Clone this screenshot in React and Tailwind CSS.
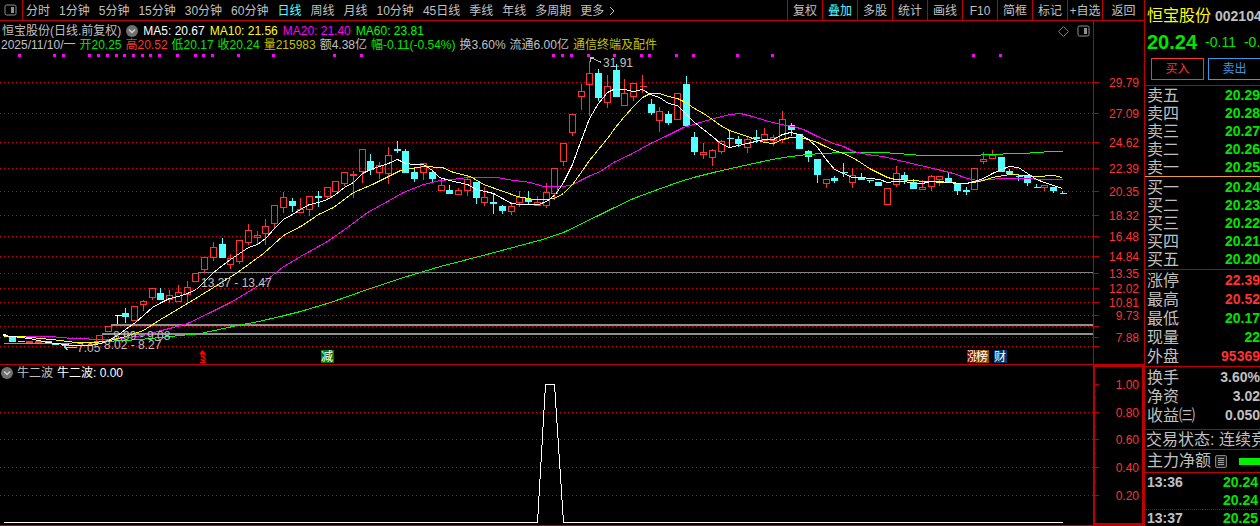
import React from "react";

const periods = [
  "分时", "1分钟", "5分钟", "15分钟", "30分钟", "60分钟", "日线", "周线",
  "月线", "10分钟", "45日线", "季线", "年线", "多周期",
];
const tools = ["复权", "叠加", "多股", "统计", "画线", "F10", "简框", "标记", "+自选"];

// [index, direction, high, bodyTop, bodyBottom, low]; u = rising (hollow), d = falling (solid), f = filled red
const candles = [
  [1, "d", 337, 337, 342, 342], [2, "d", 341, 341, 342, 342],
  [3, "f", 341, 341, 343, 343], [4, "f", 341, 341, 343, 343], [5, "d", 341, 341, 342, 342],
  [6, "d", 343, 343, 345, 345], [7, "d", 345, 345, 346, 347], [8, "f", 345, 345, 346, 346],
  [9, "f", 345, 345, 346, 346], [10, "f", 344, 344, 345, 345], [11, "u", 335, 335, 344, 344],
  [12, "u", 326, 326, 332, 332], [13, "w", 315, 315, 316, 323], [14, "d", 307, 313, 317, 322],
  [15, "u", 306, 306, 321, 321], [16, "u", 299, 301, 305, 310], [17, "u", 288, 288, 298, 299],
  [18, "d", 287, 293, 300, 300], [19, "u", 289, 295, 300, 302], [20, "u", 284, 292, 302, 302],
  [21, "u", 280, 287, 295, 303], [22, "u", 273, 273, 282, 282], [23, "u", 257, 257, 270, 272],
  [24, "u", 241, 247, 258, 260], [25, "d", 237, 244, 258, 258], [26, "u", 253, 258, 265, 268],
  [27, "u", 240, 240, 262, 263], [28, "u", 223, 230, 243, 244], [29, "u", 230, 235, 238, 243],
  [30, "u", 218, 226, 234, 244], [31, "u", 205, 205, 224, 227], [32, "u", 191, 197, 208, 212],
  [33, "d", 197, 201, 206, 211], [34, "u", 197, 209, 213, 213], [35, "u", 196, 196, 210, 215],
  [36, "d", 190, 196, 198, 206], [37, "u", 186, 187, 197, 198], [38, "u", 181, 181, 192, 192],
  [39, "u", 172, 172, 184, 185], [40, "f", 170, 174, 176, 197], [41, "u", 149, 149, 172, 182],
  [42, "d", 153, 161, 170, 174], [43, "u", 161, 165, 173, 178], [44, "u", 146, 155, 174, 183],
  [45, "d", 140, 149, 151, 152], [46, "d", 148, 151, 173, 173], [47, "d", 166, 172, 179, 181],
  [48, "u", 162, 163, 173, 179], [49, "d", 169, 172, 179, 181], [50, "u", 177, 185, 191, 191],
  [51, "d", 184, 190, 194, 194], [52, "u", 187, 190, 195, 195], [53, "u", 174, 179, 191, 195],
  [54, "d", 181, 182, 198, 203], [55, "u", 186, 197, 203, 205], [56, "d", 193, 202, 204, 213],
  [57, "d", 204, 206, 211, 213], [58, "u", 201, 206, 212, 214], [59, "u", 190, 197, 203, 206],
  [60, "d", 190, 199, 202, 204], [61, "u", 195, 202, 206, 206], [62, "u", 182, 192, 206, 207],
  [63, "u", 168, 168, 194, 199], [64, "u", 143, 143, 162, 165], [65, "u", 114, 114, 133, 135],
  [66, "u", 83, 91, 97, 109], [67, "u", 60, 73, 85, 115], [68, "d", 68, 73, 98, 100],
  [69, "u", 74, 86, 103, 107], [70, "d", 63, 70, 97, 97], [71, "u", 78, 93, 106, 106],
  [72, "u", 82, 83, 97, 100], [73, "f", 74, 86, 87, 92], [74, "d", 98, 104, 113, 114],
  [75, "u", 106, 111, 121, 131], [76, "d", 110, 114, 123, 124], [77, "u", 93, 93, 120, 120],
  [78, "d", 75, 84, 126, 126], [79, "d", 131, 137, 152, 154], [80, "u", 142, 152, 155, 158],
  [81, "u", 148, 150, 158, 165], [82, "u", 139, 141, 152, 153], [83, "d", 129, 138, 139, 147],
  [84, "d", 135, 139, 144, 146], [85, "u", 136, 139, 148, 152], [86, "d", 129, 137, 139, 142],
  [87, "u", 127, 134, 141, 142], [88, "u", 134, 137, 141, 145], [89, "u", 110, 119, 140, 142],
  [90, "d", 122, 125, 130, 135], [91, "d", 134, 134, 149, 149], [92, "d", 149, 151, 157, 161],
  [93, "d", 159, 159, 175, 182], [94, "u", 179, 179, 184, 187], [95, "d", 175, 178, 181, 182],
  [96, "d", 162, 172, 173, 176], [97, "u", 167, 175, 183, 187], [98, "d", 172, 177, 180, 180],
  [99, "d", 179, 180, 181, 182], [100, "d", 181, 182, 186, 186], [101, "u", 188, 188, 205, 205],
  [102, "u", 165, 173, 185, 186], [103, "d", 171, 175, 180, 183], [104, "d", 178, 182, 189, 189],
  [105, "u", 179, 187, 190, 190], [106, "u", 174, 176, 187, 190], [107, "u", 176, 176, 180, 185],
  [108, "d", 172, 178, 183, 183], [109, "d", 183, 183, 191, 194], [110, "d", 186, 190, 192, 194],
  [111, "u", 168, 168, 190, 190], [112, "u", 151, 159, 162, 163], [113, "u", 149, 155, 159, 159],
  [114, "d", 157, 157, 172, 172], [115, "d", 168, 171, 174, 174], [116, "d", 174, 176, 177, 180],
  [117, "d", 176, 176, 183, 185], [118, "d", 183, 187, 188, 188], [119, "u", 185, 185, 188, 190],
  [120, "d", 187, 187, 191, 192], [121, "d", 190, 193, 194, 194],
];

const ma5 =
  "3,335 12,336 20,337 29,338 38,340 47,342 56,343 64,344 73,345 90,345 100,343 108,340 117,335 125,329 135,322 143,315 152,307 161,302 169,298 178,296 187,293 196,289 204,281 213,272 222,265 230,259 239,253 248,247 257,244 265,238 274,228 283,219 292,214 300,209 309,204 318,202 327,199 335,194 344,187 353,182 362,173 370,169 379,166 388,163 397,159 405,163 414,164 423,164 432,170 439,177 449,180 458,182 467,184 476,189 485,191 493,193 502,198 511,203 520,204 538,204 546,201 555,194 563,182 572,164 580,142 589,118 598,103 607,92 613,89 624,89 633,91 642,89 650,94 659,97 668,103 677,105 685,113 694,122 703,129 712,136 720,143 729,147 738,145 747,143 755,141 764,139 773,139 782,134 790,132 799,134 808,139 817,147 825,158 834,169 843,173 852,177 861,177 869,178 879,179 887,182 895,181 904,181 913,183 922,183 930,181 939,181 948,182 957,183 966,183 974,181 983,178 992,173 1001,169 1009,166 1018,167 1027,173 1036,179 1044,182 1053,185 1062,188";
const ma10 =
  "3,336 20,336 40,338 60,340 75,342 95,342 110,340 125,336 143,330 160,319 187,303 213,287 237,272 263,253 283,235 302,225 318,214 333,207 353,192 372,184 388,176 400,170 423,166 442,167 453,172 470,176 483,184 503,191 517,196 533,199 545,199 554,198 563,193 572,184 580,173 589,160 598,149 607,138 615,127 624,116 633,106 642,97 650,93 659,93 668,96 677,98 685,102 694,108 703,113 712,119 720,125 729,130 738,133 747,136 755,139 764,142 773,143 782,139 790,137 799,137 808,139 817,142 825,146 834,150 843,153 852,157 860,162 869,168 879,173 887,177 895,179 913,180 923,181 948,182 963,183 973,182 983,180 992,177 1009,174 1027,175 1036,176 1053,175 1062,177";
const ma20 =
  "3,336 50,336 72,338 105,339 130,337 147,334 157,331 173,327 187,323 210,312 230,302 247,292 263,282 282,267 300,256 327,241 347,227 367,212 387,201 403,192 423,184 440,180 452,179 467,177 497,177 507,179 530,182 543,186 563,186 573,184 580,180 590,175 600,171 613,162 630,154 650,143 667,135 683,127 703,121 729,114 740,113 752,116 765,120 780,124 793,126 803,129 817,136 833,143 843,146 853,151 867,154 882,156 903,161 920,165 937,169 953,173 967,178 977,180 1000,178 1030,178 1037,179 1062,179";
const ma60 =
  "3,343 60,343 105,341 140,339 170,336 200,333 237,325 258,321 280,316 300,311 330,302 367,289 403,277 440,266 490,253 542,239 563,232 598,215 610,209 633,198 660,188 680,181 693,177 717,171 735,167 753,163 767,160 783,157 807,154 823,153 840,152 882,152 910,154 920,155 978,155 983,154 1023,153 1050,151 1062,151";

const gridRows = [
  [82, "29.79"], [113, "27.09"], [142, "24.62"], [168, "22.39"], [191, "20.35"],
  [215, "18.32"], [236, "16.48"], [256, "14.84"], [273, "13.35"], [288, "12.02"],
  [302, "10.81"], [315, "9.73"], [326, ""], [337, "7.88"], [346, ""],
];
const signals = [
  19, 54, 63, 89, 98, 107, 116, 124, 133, 142, 150, 159, 177, 195, 203, 212, 238, 273, 334, 361,
  553, 562, 571, 588, 614, 641, 649, 676, 693, 737, 772, 973, 1000,
];
const subRows = [[384, "1.00"], [412, "0.80"], [439, "0.60"], [467, "0.40"], [495, "0.20"]];

const tone = { u: "#ff3232", f: "#ff3232", d: "#54ffff", w: "#ffffff" };

function Candle({ c }) {
  const [i, kind, high, top, bottom, low] = c;
  const x = Math.round(2.9 + 8.752 * i);
  const color = tone[kind];
  const body = bottom - 1 - top;
  return (
    <g stroke={color} fill={kind === "u" ? "none" : color}>
      {high < top && <line x1={x} x2={x} y1={high} y2={top} />}
      {low > bottom && <line x1={x} x2={x} y1={bottom - 1} y2={low} />}
      {body > 0 ? (
        <rect x={x - 3} y={top} width="6" height={body} />
      ) : (
        <line x1={x - 3} x2={x + 4} y1={top} y2={top} />
      )}
    </g>
  );
}

function PanelIcon({ className }) {
  return (
    <svg className={className} width="13" height="12" viewBox="0 0 13 12" aria-hidden="true">
      <rect x="1" y="1" width="11" height="10" rx="1.5" fill="none" stroke="#909090" />
      <rect x="7" y="3" width="3" height="6" fill="#909090" />
    </svg>
  );
}

function DropIcon() {
  return (
    <svg width="12" height="12" viewBox="0 0 12 12" aria-hidden="true">
      <circle cx="6" cy="6" r="6" fill="#707070" />
      <path d="M3 4.5 L6 7.5 L9 4.5" fill="none" stroke="#d0d0d0" strokeWidth="1.5" />
    </svg>
  );
}

function GridLine({ y }) {
  return <line x1="0" x2="100%" y1={y + 0.5} y2={y + 0.5} stroke="#d00000" strokeDasharray="1 3" />;
}

function Badge({ x, color, children }) {
  return (
    <g>
      <rect x={x} y="350" width="13" height="13" fill={color} />
      <text x={x} y="361" fill="#ffffff">{children}</text>
    </g>
  );
}

function PriceChart() {
  return (
    <svg className="block h-[312px] w-full text-xs" role="img" aria-label="日线">
      <g transform="translate(0,-52)">
        <g shapeRendering="crispEdges">
          {gridRows.map(([y]) => <GridLine key={y} y={y} />)}
          <line x1="198" x2="100%" y1="272.5" y2="272.5" stroke="#848484" />
        </g>
        <g shapeRendering="crispEdges" stroke="#909090" strokeWidth="2">
          <line x1="111" x2="100%" y1="325" y2="325" />
          <line x1="102" x2="100%" y1="334" y2="334" />
        </g>
        <g fill="#ff00ff" shapeRendering="crispEdges">
          {signals.map((x) => (
            <rect key={x} x={x - 1} y="54" width="3" height="3" />
          ))}
        </g>
        <rect x="3" y="334" width="3" height="2" fill="#ffffff" />
        <g transform="translate(0.5,0.5)" shapeRendering="crispEdges">
          {candles.map((c) => <Candle key={c[0]} c={c} />)}
          <g fill="none">
            <polyline points={ma60} stroke="#00ff00" />
            <polyline points={ma20} stroke="#ff00ff" />
            <polyline points={ma10} stroke="#ffff00" />
            <polyline points={ma5} stroke="#ffffff" />
          </g>
          <g fill="none" stroke="#c0c0c0">
            <path d="M590 57 L601 62 M590 57 H593 M590 57 V61" />
            <path d="M64 347 H76 M68 343 L64 347 L68 350" />
          </g>
        </g>
        <g fill="#c0c0c0">
          <text x="603" y="67">31.91</text>
          <text x="201" y="287">13.37 - 13.47</text>
          <text x="113" y="340">8.99 - 9.08</text>
          <text x="104" y="349">8.02 - 8.27</text>
          <text x="77" y="352">7.05</text>
        </g>
        <path d="M202.5 350 L199 354 H206 Z" fill="#ff0000" />
        <text x="200" y="361" fill="#ff0000" className="text-[10px] font-bold">$</text>
        <path d="M200 362.5 H206" stroke="#ff0000" />
        <Badge x={321} color="#008000">减</Badge>
        <Badge x={967} color="#800000">涨</Badge>
        <Badge x={976} color="#904800">榜</Badge>
        <Badge x={994} color="#003870">财</Badge>
      </g>
    </svg>
  );
}

function PriceAxis() {
  return (
    <svg className="block h-[343px] w-[51px] shrink-0 text-xs" aria-label="价格">
      <g transform="translate(0,-21)">
        <line x1="0.5" x2="0.5" y1="21" y2="364" stroke="#c00000" />
        {gridRows.map(([y, label]) => (
          <g key={y}>
            <line x1="0" x2="6" y1={y + 0.5} y2={y + 0.5} stroke="#c00000" />
            <text x="46" y={y + 5} textAnchor="end" fill="#ff3232">{label}</text>
          </g>
        ))}
      </g>
    </svg>
  );
}

function SubAxis() {
  return (
    <div className="w-[51px] shrink-0 border-2 border-[#c00000]">
      <svg className="block h-[156px] w-full text-xs" aria-label="指标刻度">
        <g transform="translate(-2,-367)">
          {subRows.map(([y, label], i) => (
            <g key={y}>
              <line x1="2" x2="6" y1={y + 0.5} y2={y + 0.5} stroke="#c00000" />
              {i < 4 && <line x1="2" x2="3" y1={y + 14.5} y2={y + 14.5} stroke="#c00000" />}
              <text x="46" y={y + 5} textAnchor="end" fill="#ff3232">{label}</text>
            </g>
          ))}
        </g>
      </svg>
    </div>
  );
}

function Rows({ rows, rowClass }) {
  return (
    <table className="w-full">
      <tbody>
        {rows.map(([name, value, color]) => (
          <tr key={name} className={rowClass}>
            <th scope="row" className="p-0 pt-0.5 text-left text-base leading-none font-normal whitespace-nowrap text-[#c0c0c0]">
              {name}
            </th>
            <td className={"p-0 text-right text-sm leading-none font-bold " + color}>{value}</td>
          </tr>
        ))}
      </tbody>
    </table>
  );
}

const G = "text-[#00e600]";
const R = "text-[#ff3232]";
const W = "text-[#c0c0c0]";

function QuotePanel() {
  return (
    <aside className="w-[116px] shrink-0 overflow-hidden border-l border-[#c00000] whitespace-nowrap">
      <header className="border-b border-[#c00000] pb-[5px]">
        <h1 className="flex h-[30px] items-center gap-1 pt-0.5 pl-0.5">
          <span className="shrink-0 text-base font-normal text-[#ffff00]">恒宝股份</span>
          <span className="text-sm font-bold text-[#c0c0c0]">002104</span>
        </h1>
        <div className="flex h-7 items-center gap-2 pb-1 pl-0.5 text-[#00e600]">
          <span className="text-xl leading-none font-bold">20.24</span>
          <span className="text-sm">-0.11</span>
          <span className="text-sm">-0.54%</span>
        </div>
        <div className="flex gap-1 pl-1.5">
          <button type="button" className="h-[22px] w-[53px] shrink-0 border border-[#ff3232] text-xs text-[#ff3232]">买入</button>
          <button type="button" className="h-[22px] w-[53px] shrink-0 border border-[#3c96e6] text-xs text-[#3c96e6]">卖出</button>
        </div>
      </header>
      <section className="border-b border-[#f0a030] pl-0.5">
        <Rows
          rowClass="h-[18px]"
          rows={[["卖五", "20.29", G], ["卖四", "20.28", G], ["卖三", "20.27", G], ["卖二", "20.26", G], ["卖一", "20.25", G]]}
        />
      </section>
      <section className="border-b border-[#c00000] py-px pl-0.5">
        <Rows
          rowClass="h-[18px]"
          rows={[["买一", "20.24", G], ["买二", "20.23", G], ["买三", "20.22", G], ["买四", "20.21", G], ["买五", "20.20", G]]}
        />
      </section>
      <section className="border-b border-[#c00000] pb-px pl-0.5">
        <Rows
          rowClass="h-[19px]"
          rows={[["涨停", "22.39", R], ["最高", "20.52", R], ["最低", "20.17", G], ["现量", "22", G], ["外盘", "95369", R]]}
        />
      </section>
      <section className="border-b border-[#c00000] pb-[5px] pl-0.5">
        <Rows
          rowClass="h-[19px]"
          rows={[["换手", "3.60%", W], ["净资", "3.02", W], ["收益㈢", "0.050", W]]}
        />
      </section>
      <p className="h-5 border-b border-[#c00000] pl-px text-base leading-[19px] text-[#c0c0c0]">交易状态: 连续竞价</p>
      <div className="flex h-[23px] items-center border-b border-[#c00000] pl-0.5 text-base text-[#c0c0c0]">
        主力净额
        <svg className="ml-1 shrink-0" width="12" height="13" viewBox="0 0 12 13" aria-hidden="true">
          <rect x="0.5" y="0.5" width="11" height="12" rx="1.5" fill="#202020" stroke="#808080" />
          <path d="M3 3.5H9M3 5.5H9M3 7.5H9M3 9.5H9" stroke="#a0a0a0" />
        </svg>
        <span className="ml-3 h-[7px] flex-1 bg-[#00f000]" />
      </div>
      <table className="w-full text-sm leading-none font-bold">
        <tbody>
          <tr className="h-[18px]">
            <td className="p-0 pl-0.5 text-[#c0c0c0]">13:36</td>
            <td className="p-0 pr-0.5 text-right text-[#00e600]">20.24</td>
          </tr>
          <tr className="h-[18px] border-b border-dotted border-[#c00000]">
            <td className="p-0" />
            <td className="p-0 pr-0.5 text-right text-[#00e600]">20.24</td>
          </tr>
          <tr className="h-[17px]">
            <td className="p-0 pl-0.5 text-[#c0c0c0]">13:37</td>
            <td className="p-0 pr-0.5 text-right text-[#00e600]">20.25</td>
          </tr>
        </tbody>
      </table>
    </aside>
  );
}

export default function App() {
  return (
    <div className="flex items-stretch overflow-hidden bg-black font-['Liberation_Sans','Noto_Sans_CJK_SC',sans-serif] text-[#c0c0c0]">
      <main className="min-w-0 flex-1">
        <nav className="flex h-[21px] items-stretch overflow-hidden border-b border-[#c00000] text-xs leading-[18px] whitespace-nowrap">
          <button type="button" aria-label="侧栏" className="flex w-[23px] shrink-0 items-center border-r border-[#c00000] pl-1">
            <PanelIcon />
          </button>
          <div className="flex min-w-0 flex-1 gap-[9px] overflow-hidden pl-[3px]">
            {periods.map((p) => (
              <button key={p} type="button" className={"pt-0.5 " + (p === "日线" ? "text-[#54ffff]" : "")}>{p}</button>
            ))}
            <button type="button" className="flex items-center pt-0.5">
              更多
              <svg className="ml-1" width="8" height="10" viewBox="0 0 8 10" aria-hidden="true">
                <path d="M2 1 L6 5 L2 9" fill="none" stroke="#c0c0c0" />
              </svg>
            </button>
          </div>
          {tools.map((t) => (
            <button key={t} type="button" className={"w-[35px] shrink-0 border-l border-[#c00000] pt-0.5 " + (t === "叠加" ? "text-[#54ffff]" : "")}>
              {t}
            </button>
          ))}
          <button type="button" className="w-[42px] shrink-0 border-l border-[#c00000] pt-0.5">返回</button>
        </nav>

        <section className="flex border-b border-[#c00000]">
          <div className="min-w-0 flex-1">
            <div className="h-[31px] overflow-hidden pt-[3px] text-xs whitespace-nowrap">
              <div className="flex h-3.5 items-center gap-[5px] pl-0.5 leading-[14px]">
                <span>恒宝股份(日线.前复权)</span>
                <button type="button" aria-label="指标菜单"><DropIcon /></button>
                <span className="text-white">MA5: 20.67</span>
                <span className="text-[#ffff00]">MA10: 21.56</span>
                <span className="text-[#ff00ff]">MA20: 21.40</span>
                <span className="text-[#00ff00]">MA60: 23.81</span>
                <span className="ml-auto flex items-center gap-2 pr-[3px]">
                  <svg width="11" height="11" viewBox="0 0 11 11" aria-hidden="true">
                    <path d="M5.5 0.5 L10.5 5.5 L5.5 10.5 L0.5 5.5 Z" fill="none" stroke="#808080" />
                  </svg>
                  <PanelIcon />
                </span>
              </div>
              <div className="flex h-3.5 items-center gap-1 pl-px leading-[14px]">
                <span>2025/11/10/一</span>
                <span className="text-[#00e600]">开20.25</span>
                <span className="text-[#ff3232]">高20.52</span>
                <span className="text-[#00e600]">低20.17</span>
                <span className="text-[#00e600]">收20.24</span>
                <span className="text-[#c0c000]">量215983</span>
                <span>额4.38亿</span>
                <span className="text-[#00e600]">幅-0.11(-0.54%)</span>
                <span>换3.60%</span>
                <span>流通6.00亿</span>
                <span className="text-[#c0c000]">通信终端及配件</span>
              </div>
            </div>
            <PriceChart />
          </div>
          <PriceAxis />
        </section>

        <section className="flex border-b border-[#c00000]">
          <div className="min-w-0 flex-1">
            <div className="flex h-4 items-center gap-1 pl-px text-xs">
              <button type="button" aria-label="指标菜单"><DropIcon /></button>
              <span>牛二波</span>
              <span className="text-white">牛二波: 0.00</span>
            </div>
            <svg className="block h-[144px] w-full" role="img" aria-label="牛二波">
              <g transform="translate(0,-381)" shapeRendering="crispEdges">
                {subRows.slice(1).map(([y]) => <GridLine key={y} y={y} />)}
              </g>
              <g transform="translate(0.5,-380.5)" shapeRendering="crispEdges">
                <polyline points="3,522 537,522 545,384 554,384 563,522 1062,522" fill="none" stroke="#ffffff" />
              </g>
            </svg>
          </div>
          <SubAxis />
        </section>
      </main>
      <QuotePanel />
    </div>
  );
}
